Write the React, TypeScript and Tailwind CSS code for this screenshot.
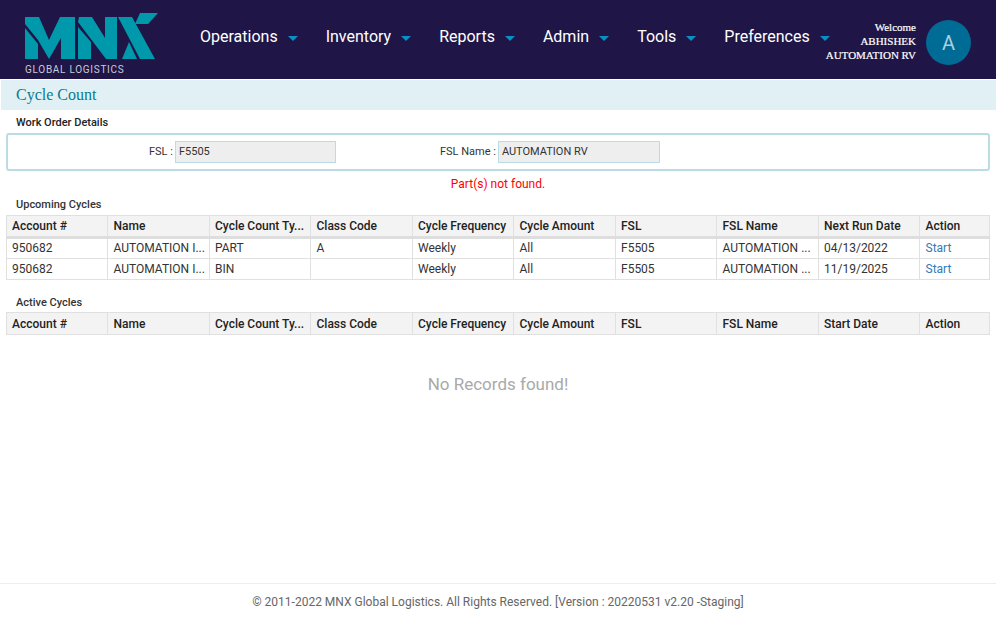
import React from "react";

const roboto = "font-['Roboto',sans-serif]";
const serif = "font-['Liberation_Serif',serif]";

function Logo() {
  return (
    <svg width="136" height="50" viewBox="25 12 136 50" className="block" fill="#0098ab">
      <polygon points="25,17 39,17 49,40 60,17 75,17 75,59 61,59 61,38 49,59 38,40 25,24" />
      <polygon points="25,28 38,44 38,59 25,59" />
      <polygon points="79,17 92,17 105,38 105,17 117,17 117,59 106,59 78,22" />
      <polygon points="78,27 91,42 91,59 78,59" />
      <polygon points="118,17 132,17 155,59 140,59" />
      <polygon points="129,42 137,59 122,59" />
      <polygon points="140,13 158,13 148,24 135,24" />
    </svg>
  );
}

function Caret() {
  return <span className="block w-0 h-0 border-x-[5px] border-x-transparent border-t-[5px] border-t-[#0a8fc4] mt-[3px]" />;
}

function NavItem({ label }: { label: string }) {
  return (
    <div className="flex items-center gap-[10px]">
      <span className="text-base text-white">{label}</span>
      <Caret />
    </div>
  );
}

const upcomingHead = ["Account #", "Name", "Cycle Count Ty...", "Class Code", "Cycle Frequency", "Cycle Amount", "FSL", "FSL Name", "Next Run Date", "Action"];
const activeHead = ["Account #", "Name", "Cycle Count Ty...", "Class Code", "Cycle Frequency", "Cycle Amount", "FSL", "FSL Name", "Start Date", "Action"];
const rows = [
  ["950682", "AUTOMATION I...", "PART", "A", "Weekly", "All", "F5505", "AUTOMATION ...", "04/13/2022", "Start"],
  ["950682", "AUTOMATION I...", "BIN", "", "Weekly", "All", "F5505", "AUTOMATION ...", "11/19/2025", "Start"],
];

function DataTable({ head, data, thick }: { head: string[]; data: string[][]; thick?: boolean }) {
  return (
    <table className="w-[983.5px] ml-[5.5px] table-fixed border-collapse text-xs text-[#333]">
      <colgroup>
        {head.map((_, i) => (
          <col key={i} className={i === 9 ? "w-[70px]" : "w-[101.5px]"} />
        ))}
      </colgroup>
      <thead>
        <tr className="h-[22px] bg-[#f3f3f3]">
          {head.map((h, i) => (
            <th
              key={i}
              className={`border border-[#e0e0e0] pl-[5.5px] pr-[5px] text-left font-medium text-[#222] whitespace-nowrap ${thick ? "border-b-[3px] border-b-[#dedede]" : ""}`}
            >
              {h}
            </th>
          ))}
        </tr>
      </thead>
      <tbody>
        {data.map((r, ri) => (
          <tr key={ri} className="h-[21px]">
            {r.map((c, i) => (
              <td
                key={i}
                className={`border border-[#e0e0e0] pl-[5.5px] pr-[5px] whitespace-nowrap overflow-hidden ${ri === 0 ? "pb-[2px]" : ""} ${i === 9 ? "text-[#337ab7]" : ""}`}
              >
                {c}
              </td>
            ))}
          </tr>
        ))}
      </tbody>
    </table>
  );
}

export default function App() {
  return (
    <div className={`${roboto} relative w-[996px] h-[621px] bg-white flex flex-col overflow-hidden`}>
      <header className="h-[79px] shrink-0 bg-[#1f1647] flex items-start">
        <div className="ml-[25px] w-[175px] shrink-0 pt-[12px] h-[79px]">
          <Logo />
          <div className="text-[10px] leading-none tracking-[0.72px] text-[#c9cbd6] mt-[3px]">GLOBAL LOGISTICS</div>
        </div>
        <nav className="w-[600px] shrink-0 h-[73px] flex items-center gap-7 whitespace-nowrap">
          {["Operations", "Inventory", "Reports", "Admin", "Tools", "Preferences"].map((n) => (
            <NavItem key={n} label={n} />
          ))}
        </nav>
        <div className="ml-auto mr-[25px] mt-[20px] flex items-start gap-[10px]">
          <div className={`${serif} text-right text-[11px] text-white pt-px whitespace-nowrap [-webkit-text-stroke:0.2px_white]`}>
            <div className="h-[13px] leading-[13px]">Welcome</div>
            <div className="h-[14px] leading-[14px]">ABHISHEK</div>
            <div className="h-[14px] leading-[14px]">AUTOMATION RV</div>
          </div>
          <div className="w-[45px] h-[45px] shrink-0 rounded-full bg-[#006b94] flex items-center justify-center text-xl text-[#a9d0e2]">A</div>
        </div>
      </header>

      <div className={`${serif} mt-px ml-px h-[30px] shrink-0 bg-[#e1f0f4] pl-[15px] text-base leading-[30px] text-[#0a7a8c]`}>Cycle Count</div>

      <div className="pl-4 mt-[6px] text-[11px] leading-[13px] font-medium text-[#222]">Work Order Details</div>

      <div className="mx-[6px] mt-[4px] h-[38px] shrink-0 border-2 border-[#b9dde2] rounded-[3px] flex items-center text-[11px] text-[#333]">
        <span className="ml-[141px] mr-[2px]">FSL :</span>
        <div className="w-[161px] h-[22px] bg-[#eeeeee] border border-[#b9dde2] pl-[3px] leading-[20px]">F5505</div>
        <span className="ml-[104px] mr-[2px]">FSL Name :</span>
        <div className="w-[162px] h-[22px] bg-[#eeeeee] border border-[#b9dde2] pl-[3px] leading-[20px]">AUTOMATION RV</div>
      </div>

      <div className="mt-[6px] h-[14px] leading-[14px] text-xs text-center text-[#ff0000]">Part(s) not found.</div>

      <div className="pl-4 mt-[7px] mb-[4px] text-[11px] leading-[13px] font-medium text-[#333]">Upcoming Cycles</div>
      <DataTable head={upcomingHead} data={rows} thick />

      <div className="pl-4 mt-[16px] mb-[3px] text-[11px] leading-[13px] font-medium text-[#333]">Active Cycles</div>
      <DataTable head={activeHead} data={[]} />

      <div className="mt-[39px] text-center text-[17px] leading-5 text-[#a9a9a9]">No Records found!</div>

      <footer className="mt-auto h-[38px] shrink-0 border-t border-[#eeeeee] text-center text-xs leading-[36px] text-[#666]">
        © 2011-2022 MNX Global Logistics. All Rights Reserved. [Version : 20220531 v2.20 -Staging]
      </footer>
    </div>
  );
}
